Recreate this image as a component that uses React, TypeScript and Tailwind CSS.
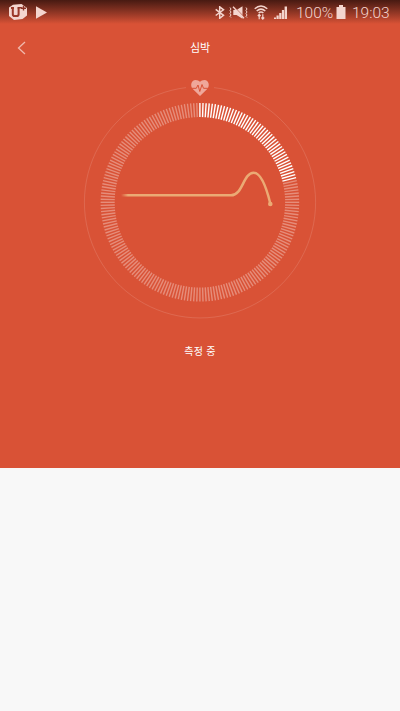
const TICKS = 200;
const ACTIVE = 43;
const TICK_OUTER = 99.3;
const TICK_INNER = 85.2;

const ticks = Array.from({ length: TICKS }, (_, i) => i);

function StatusBar() {
  return (
    <div className="flex h-6 items-center bg-linear-to-b from-[#481a12] to-[#d95236] pl-[9px] pr-[10px] text-[#f4d5ce]">
      <svg width="18" height="16" viewBox="0 0 18 16">
        <path d="M4 .8 12.5 0 18 4v7.5L13.5 15 5 16 0 12V3.5z" fill="currentColor" />
        <path d="M2 4h3M3.8 4v6.2q0 1.8 1.8 1.8h2.2q1.8 0 1.8-1.8V4" fill="none" stroke="#9b3929" strokeWidth="2" />
        <path d="M8.5 3.8h4.3M14.5 1.8v4.8M12 4.3h5" fill="none" stroke="#8b3224" strokeWidth="1.4" />
      </svg>
      <svg className="ml-[9px]" width="11" height="13" viewBox="0 0 11 13">
        <path d="M0 .3 11 6.5 0 12.7z" fill="currentColor" />
      </svg>
      <svg className="ml-auto" width="10" height="13" viewBox="0 0 10 13" fill="none" stroke="currentColor" strokeWidth="1.5">
        <path d="m.7 3.3 7.8 6-3.8 3V.8l3.8 3L.7 9.5" />
      </svg>
      <svg className="ml-1" width="19" height="13" viewBox="0 0 19 13">
        <path d="M4.3 4H7.5L13.500.3v12.400L7.500 9H4.300z" fill="currentColor" />
        <path d="M5.200.8 15.700 11.500" stroke="#a23f2b" strokeWidth=".8" />
        <path d="M4 .8 15 12.300" stroke="currentColor" strokeWidth="1.300" />
        <path d="m1 1.500 1 1.500-1 1.500L2 6 1 7.500 2 9l-1 1.500 1 1M17 1.500l1 1.500-1 1.500L18 6l-1 1.500L18 9l-1 1.500 1 1" fill="none" stroke="currentColor" strokeWidth="1" />
      </svg>
      <svg className="ml-1.5" width="14" height="15" viewBox="0 0 14 15" fill="none" stroke="currentColor" strokeWidth="1.5">
        <path d="M.7 3.8Q7-1.7 13.3 3.8M2.7 6Q7 2.2 11.3 6M4.6 8Q7 6 9.4 8" />
        <path d="M5.200 14.300V9.600M3.800 11l1.400-1.600L6.600 11M8.800 9.300V14M7.400 12.500 8.800 14l1.400-1.500" strokeWidth="1.200" />
      </svg>
      <svg className="ml-1.5" width="13" height="13" viewBox="0 0 13 13" fill="currentColor">
        <path d="M0 11.500h2V13H0zM2.500 9.500h2.200V13H2.500zM5.200 7h2.200v6H5.200zM7.900 4h2.200v9H7.900zM10.600.500h2.400V13h-2.400z" />
      </svg>
      <span className="ml-[9px] mt-0.5 w-[38px] whitespace-nowrap font-['Roboto'] text-[15.5px] font-light leading-6">100%</span>
      <svg className="ml-0.5" width="10" height="14" viewBox="0 0 10 14">
        <path d="M.5 2H3V0h4v2h2.500v12H.5z" fill="currentColor" />
      </svg>
      <span className="ml-[6px] mt-0.5 w-[38px] whitespace-nowrap font-['Roboto'] text-[15.5px] font-light leading-6">19:03</span>
    </div>
  );
}

function Header() {
  return (
    <header className="grid h-12 grid-cols-3 items-center px-[17px]">
      <svg width="9" height="14" viewBox="0 0 9 14" fill="none" stroke="#f0b9ad" strokeWidth="1.3">
        <path d="M8 1 1.5 7 8 13" />
      </svg>
      <h1 className="pt-0.5 text-center text-[11px] leading-4 text-white">심박</h1>
    </header>
  );
}

function Gauge() {
  return (
    <svg className="mx-auto block" width="240" height="252" viewBox="80 72 240 252" fill="none">
      <defs>
        <linearGradient id="pulse" gradientUnits="userSpaceOnUse" x1="121" y1="0" x2="128" y2="0">
          <stop offset="0" stopColor="#ebaa74" stopOpacity="0" />
          <stop offset="1" stopColor="#ebaa74" />
        </linearGradient>
      </defs>
      <path d="M214 87.6A115.6 115.6 0 1 1 186 87.6" stroke="#fff" strokeOpacity=".13" />
      {ticks.map((i) => (
        <path
          key={i}
          d={`M199.9 ${202.3 - TICK_OUTER}V${202.3 - TICK_INNER}`}
          transform={`rotate(${(i * 360) / TICKS} 199.9 202.3)`}
          stroke="#fff"
          strokeOpacity={i < ACTIVE ? 1 : 0.34}
          strokeWidth="1.4"
        />
      ))}
      <path d="M200 96 192.500 88.800C190 85.500 191.200 80 195.500 80Q198.500 80 200 81.800Q201.500 80 204.500 80C208.800 80 210 85.500 207.500 88.800Z" fill="#efa79a" />
      <path d="M191 88.300h5.300l1.700-3.300 1.800 6.500 2.200-7 1.500 3.800H209" stroke="#d95236" />
      <path d="M121 195.300H231C243 195.300 243 172.800 253.700 172.800C261 172.800 266 186 270.300 203.500" stroke="url(#pulse)" strokeWidth="2.500" />
      <circle cx="270.300" cy="204" r="2.300" fill="#ebaa74" />
    </svg>
  );
}

export default function App() {
  return (
    <div className="h-[711px] w-[400px] bg-[#f8f8f8] font-['Roboto','Noto_Sans_CJK_KR',sans-serif]">
      <main className="h-[468px] bg-[#d95236]">
        <StatusBar />
        <Header />
        <Gauge />
        <p className="mt-5 text-center text-[10px] leading-4 tracking-[.3px] text-white">측정 중</p>
      </main>
    </div>
  );
}
